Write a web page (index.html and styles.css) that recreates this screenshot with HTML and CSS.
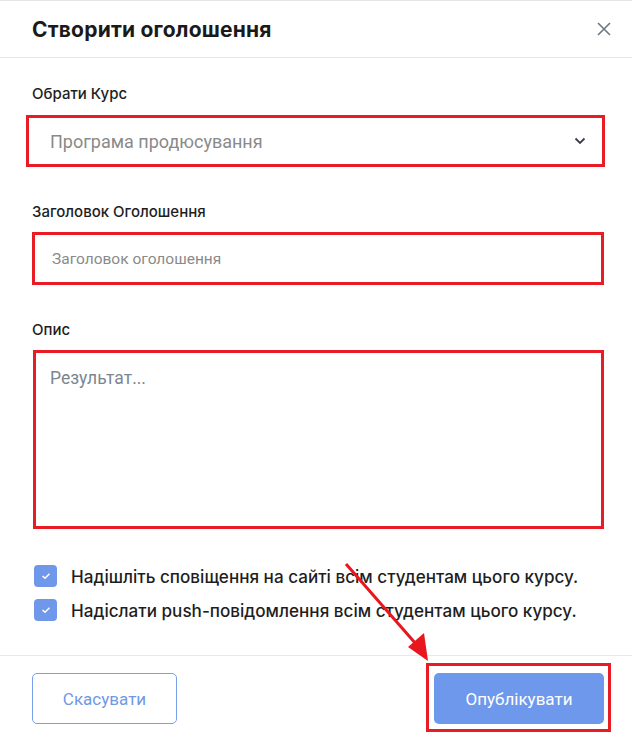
FILE: index.html
```html
<!DOCTYPE html>
<html lang="uk">
<head>
<meta charset="utf-8">
<title>Створити оголошення</title>
<link rel="stylesheet" href="styles.css">
</head>
<body>
<div class="modal">
  <header class="modal-header">
    <h1 class="modal-title">Створити оголошення</h1>
    <button class="close-btn" aria-label="Закрити">
      <svg width="16" height="16" viewBox="0 0 16 16"><path d="M2 2L14 14M14 2L2 14" stroke="#6b7785" stroke-width="1.6" fill="none"/></svg>
    </button>
  </header>

  <div class="modal-body">
    <div class="field">
      <div class="label">Обрати Курс</div>
      <div class="box box-select">
        <span class="select-text">Програма продюсування</span>
        <svg class="chevron" width="12" height="8" viewBox="0 0 12 8"><path d="M1.5 1.5L6 6L10.5 1.5" stroke="#3a3f47" stroke-width="1.8" fill="none"/></svg>
      </div>
    </div>

    <div class="field">
      <div class="label">Заголовок Оголошення</div>
      <div class="box box-input">
        <span class="input-text">Заголовок оголошення</span>
      </div>
    </div>

    <div class="field">
      <div class="label">Опис</div>
      <div class="box box-textarea">
        <span class="textarea-text">Результат...</span>
      </div>
    </div>

    <div class="checks">
      <label class="check">
        <span class="checkbox"><svg width="10" height="8" viewBox="0 0 10 8"><path d="M1.5 4L4 6.3L8.5 1.7" stroke="#fff" stroke-width="1.5" fill="none"/></svg></span>
        <span class="check-text">Надішліть сповіщення на сайті всім студентам цього курсу.</span>
      </label>
      <label class="check">
        <span class="checkbox"><svg width="10" height="8" viewBox="0 0 10 8"><path d="M1.5 4L4 6.3L8.5 1.7" stroke="#fff" stroke-width="1.5" fill="none"/></svg></span>
        <span class="check-text">Надіслати push-повідомлення всім студентам цього курсу.</span>
      </label>
    </div>
  </div>

  <footer class="modal-footer">
    <button class="btn btn-cancel">Скасувати</button>
    <div class="highlight">
      <button class="btn btn-primary">Опублікувати</button>
    </div>
  </footer>

  <svg class="arrow" width="632" height="740" viewBox="0 0 632 740">
    <line x1="346" y1="563" x2="416" y2="643" stroke="#e8171f" stroke-width="3"/>
    <polygon points="408,646 424,632 428,660" fill="#e8171f"/>
  </svg>
</div>
</body>
</html>
```
FILE: styles.css
```css
* { box-sizing: border-box; }
html, body { margin: 0; padding: 0; background: #fff; }
body { font-family: Inter, "Noto Sans", sans-serif; color: #1c1c1c; }

.modal {
  position: relative;
  width: 632px;
  height: 740px;
  border-top: 1px solid #e4e4e4;
  overflow: hidden;
}

.modal-header {
  height: 57px;
  padding: 0 20px 0 32px;
  display: flex;
  align-items: center;
  justify-content: space-between;
  border-bottom: 1px solid #e8e8e8;
}
.modal-title {
  margin: 0;
  font-size: 21px;
  font-weight: 700;
  color: #1a1a1a;
  letter-spacing: 0.2px;
}
.close-btn {
  border: 0;
  background: none;
  padding: 0;
  width: 16px;
  height: 16px;
  display: flex;
}

.modal-body {
  padding: 26px 28px 0 32px;
}

.field { display: flex; flex-direction: column; }
.field + .field { margin-top: 35px; }

.label {
  font-size: 15px;
  font-weight: 500;
  line-height: 20px;
  color: #1e1e1e;
  margin-bottom: 10px;
}
.field:first-child .label { margin-bottom: 11px; }

.box {
  border: 3px solid #e81c24;
  display: flex;
  align-items: center;
  background: #fff;
}
.box-select {
  height: 52px;
  margin-left: -6px;
  margin-right: -1px;
  padding: 0 16px 0 21px;
  justify-content: space-between;
}
.select-text {
  font-family: Roboto, "Liberation Sans", sans-serif;
  font-size: 18px;
  color: #8a8a8a;
}
.box-input {
  height: 53px;
  padding: 0 17px;
}
.input-text {
  font-family: Roboto, "Liberation Sans", sans-serif;
  font-size: 15.5px;
  color: #8a8a8a;
}
.box-textarea {
  height: 179px;
  margin-left: 1px;
  align-items: flex-start;
  padding: 15px 14px;
}
.textarea-text {
  font-family: Roboto, "Liberation Sans", sans-serif;
  font-size: 17.5px;
  color: #7d8591;
}

.checks {
  margin-top: 36px;
  display: flex;
  flex-direction: column;
  gap: 12px;
  padding-left: 2px;
}
.check { display: flex; align-items: center; gap: 14px; }
.checkbox {
  width: 23px;
  height: 22px;
  border-radius: 4px;
  background: #6f97ea;
  display: flex;
  align-items: center;
  justify-content: center;
}
.check-text {
  font-size: 17.1px;
  font-weight: 500;
  color: #1e1e1e;
}

.modal-footer {
  position: absolute;
  left: 0;
  right: 0;
  top: 654px;
  border-top: 1px solid #e8e8e8;
  padding: 7px 21px 0 32px;
  display: flex;
  justify-content: space-between;
  align-items: flex-start;
}
.btn {
  font-family: Roboto, "Liberation Sans", sans-serif;
  font-size: 17px;
  height: 51px;
  border-radius: 5px;
  cursor: pointer;
}
.btn-cancel {
  margin-top: 10px;
  width: 145px;
  border: 1px solid #7a9fea;
  background: #fff;
  color: #7098e6;
}
.highlight {
  border: 3px solid #e81c24;
  padding: 7px 4px 5px 5px;
  display: flex;
}
.btn-primary {
  width: 170px;
  border: 0;
  background: #6d98ec;
  color: #fff;
}

.arrow {
  position: absolute;
  left: 0;
  top: 0;
  pointer-events: none;
}
```
